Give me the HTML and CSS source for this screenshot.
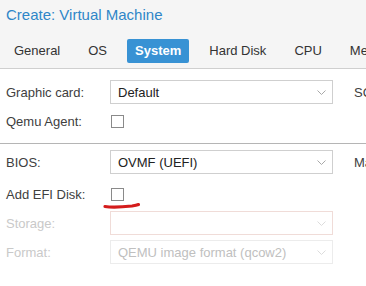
FILE: index.html
```html
<!DOCTYPE html>
<html lang="en">
<head>
    <meta charset="UTF-8">
    <title>Create: Virtual Machine</title>
    <link rel="stylesheet" href="styles.css">
</head>
<body>
    <header class="win-head">
        <div class="win-title">Create: Virtual Machine</div>
        <nav class="tabs">
            <span class="tab">General</span>
            <span class="tab">OS</span>
            <span class="tab active">System</span>
            <span class="tab">Hard Disk</span>
            <span class="tab">CPU</span>
            <span class="tab">Memory</span>
        </nav>
    </header>
    <main class="form">
        <div class="cols">
            <div class="col-left">
                <div class="row">
                    <label>Graphic card:</label>
                    <div class="combo"><span>Default</span><svg class="chev" width="9" height="5" viewBox="0 0 9 5"><path d="M0.5 0.5 L4.5 4.5 L8.5 0.5" fill="none" stroke="#a8a8a8"/></svg></div>
                </div>
                <div class="row">
                    <label>Qemu Agent:</label>
                    <span class="check"></span>
                </div>
            </div>
            <div class="col-right">
                <div class="row"><label>SCSI Controller:</label></div>
            </div>
        </div>
        <hr class="sep">
        <div class="cols">
            <div class="col-left">
                <div class="row row-bios">
                    <label>BIOS:</label>
                    <div class="combo"><span>OVMF (UEFI)</span><svg class="chev" width="9" height="5" viewBox="0 0 9 5"><path d="M0.5 0.5 L4.5 4.5 L8.5 0.5" fill="none" stroke="#a8a8a8"/></svg></div>
                </div>
                <div class="row row-efi">
                    <label>Add EFI Disk:</label>
                    <span class="check"></span>
                    <svg class="mark" width="40" height="9" viewBox="0 0 40 9"><path d="M3 5.5 C10 6.5 20 6 30 5 C33 4.6 35 4.2 36.5 3.6" fill="none" stroke="#d41c1c" stroke-width="3.2" stroke-linecap="round"/></svg>
                </div>
                <div class="row disabled">
                    <label>Storage:</label>
                    <div class="combo invalid"><span></span><svg class="chev" width="9" height="5" viewBox="0 0 9 5"><path d="M0.5 0.5 L4.5 4.5 L8.5 0.5" fill="none" stroke="#dcdcdc"/></svg></div>
                </div>
                <div class="row disabled">
                    <label>Format:</label>
                    <div class="combo"><span>QEMU image format (qcow2)</span><svg class="chev" width="9" height="5" viewBox="0 0 9 5"><path d="M0.5 0.5 L4.5 4.5 L8.5 0.5" fill="none" stroke="#dcdcdc"/></svg></div>
                </div>
            </div>
            <div class="col-right">
                <div class="row"><label>Machine:</label></div>
            </div>
        </div>
    </main>
</body>
</html>
```

FILE: styles.css
```css
body {
    margin: 0;
    font-family: "Liberation Sans", Arial, sans-serif;
    font-size: 13px;
    color: #404040;
    background-color: #fff;
    width: 366px;
    height: 286px;
    overflow: hidden;
}

.win-head {
    background-color: #f5f5f5;
    border-bottom: 1px solid #cfcfcf;
    height: 68px;
}

.win-title {
    font-size: 15px;
    color: #2f86c8;
    padding: 6px 0 0 6px;
    height: 25px;
    line-height: 18px;
}

.tabs {
    display: flex;
    gap: 12px;
    padding: 8px 0 0 6px;
    white-space: nowrap;
}

.tab {
    padding: 0 8px;
    height: 24px;
    line-height: 24px;
    color: #333;
    border-radius: 2px;
}

.tab.active {
    background-color: #3892d4;
    color: #fff;
    font-weight: bold;
}

.form {
    padding-top: 11px;
}

.cols {
    display: flex;
    white-space: nowrap;
}

.col-left {
    width: 348px;
    flex: none;
}

.col-right {
    overflow: hidden;
    flex: 1;
}

.row {
    display: flex;
    align-items: center;
    height: 24px;
    margin-bottom: 5px;
    padding-left: 6px;
    position: relative;
}

.row label {
    width: 104px;
    flex: none;
}

.combo {
    box-sizing: border-box;
    width: 223px;
    height: 24px;
    border: 1px solid #cfcfcf;
    display: flex;
    align-items: center;
    justify-content: space-between;
    padding: 0 6px 0 7px;
    color: #222;
}

.check {
    width: 11px;
    height: 11px;
    border: 1px solid #8a8a8a;
    margin-left: 1px;
}

.row-bios {
    margin-bottom: 8px;
}

.row-efi {
    margin-bottom: 5px;
}

.mark {
    position: absolute;
    left: 102px;
    top: 19px;
}

.disabled label {
    color: #c9c9c9;
}

.disabled .combo {
    border-color: #ececec;
    color: #c0c0c0;
}

.disabled .combo.invalid {
    border-color: #f0dcd8;
}

.sep {
    border: none;
    border-top: 1px solid #b5b5b5;
    margin: 5px 0 6px 0;
}
```
